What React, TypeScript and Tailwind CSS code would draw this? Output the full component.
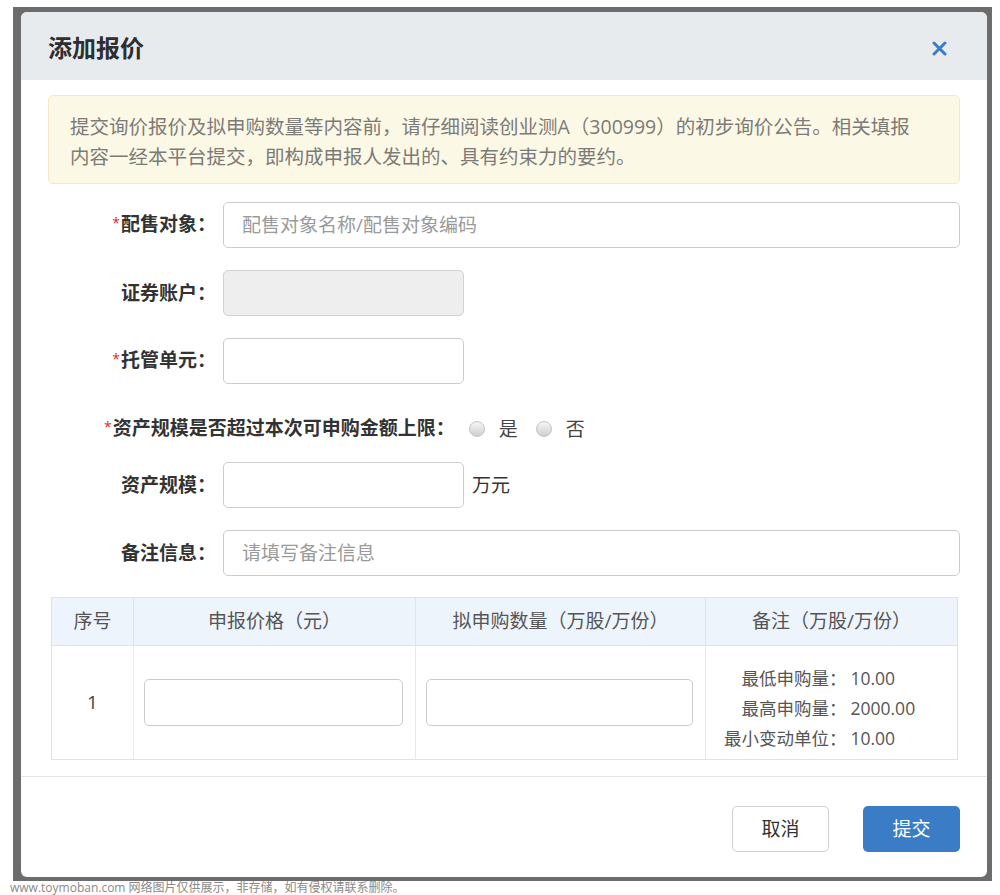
import React from 'react';

function FieldLabel({ text, required }: { text: string; required?: boolean }) {
  return (
    <div className="w-[168px] shrink-0 text-right text-[19px] font-bold text-[#333] leading-[24px] whitespace-nowrap">
      {required && <span className="relative -top-[3px] mr-px text-[14px] font-normal text-[#e0282e]">*</span>}
      {text}：
    </div>
  );
}

function Radio({ label }: { label: string }) {
  return (
    <div className="flex items-center gap-[14px]">
      <span className="w-[16px] h-[16px] rounded-full border border-[#c4c4c4] bg-gradient-to-b from-[#f6f6f6] to-[#cfcfcf]" />
      <span className="text-[19px] leading-[24px] text-[#444]">{label}</span>
    </div>
  );
}

function NoteLine({ label, value }: { label: string; value: string }) {
  return (
    <>
      <span className="text-right">{label}：</span>
      <span>{value}</span>
    </>
  );
}

export default function App() {
  return (
    <div className="w-[1000px] h-[895px] bg-white pt-[7px] pl-[13px] [font-family:'Open_Sans','Noto_Sans_CJK_SC',sans-serif]">
      {/* dark frame around the dialog */}
      <div className="w-[979px] bg-[#6c6c6c] pl-[8px] pr-[5px] pt-[5px] pb-[4px]">
        <div className="w-[966px] h-[865px] rounded-[6px] bg-white flex flex-col overflow-hidden">
          {/* Header */}
          <div className="h-[68px] shrink-0 bg-[#e8ebee] flex items-center justify-between pl-[27px] pr-[40px] pt-[4px]">
            <h1 className="text-[24px] font-bold text-[#2e2e2e] leading-none">添加报价</h1>
            <svg width="15" height="15" viewBox="0 0 15 15" className="text-[#3a7dc6]">
              <path d="M2 2 L13 13 M13 2 L2 13" stroke="currentColor" strokeWidth="3" strokeLinecap="round" />
            </svg>
          </div>

          {/* Body */}
          <div className="flex-1 px-[27px] pt-[15px]">
            <div className="h-[89px] rounded-[5px] border border-[#f3e8c8] bg-[#fbf8e6] pl-[21px] pt-[16px] text-[19.5px] leading-[30px] text-[#7d7b78]">
              提交询价报价及拟申购数量等内容前，请仔细阅读创业测A（300999）的初步询价公告。相关填报
              <br />
              内容一经本平台提交，即构成申报人发出的、具有约束力的要约。
            </div>

            <div className="flex flex-col">
              <div className="mt-[18px] h-[46px] flex items-center gap-[7px]">
                <FieldLabel text="配售对象" required />
                <input
                  readOnly
                  placeholder="配售对象名称/配售对象编码"
                  className="h-[46px] w-[739px] rounded-[5px] border border-[#ccc] bg-white px-[18px] text-[19px] placeholder:text-[#9a9a9a] outline-none"
                />
              </div>

              <div className="mt-[22px] h-[46px] flex items-center gap-[7px]">
                <FieldLabel text="证券账户" />
                <input readOnly disabled className="h-[46px] w-[241px] rounded-[5px] border border-[#d2d2d2] bg-[#eeeeee] outline-none" />
              </div>

              <div className="mt-[22px] h-[46px] flex items-center gap-[7px]">
                <FieldLabel text="托管单元" required />
                <input readOnly className="h-[46px] w-[241px] rounded-[5px] border border-[#ccc] bg-white outline-none" />
              </div>

              <div className="mt-[22px] h-[46px] flex items-center pl-[56px]">
                <span className="text-[19px] leading-[24px] font-bold text-[#333] whitespace-nowrap">
                  <span className="relative -top-[3px] mr-px text-[14px] font-normal text-[#e0282e]">*</span>
                  资产规模是否超过本次可申购金额上限：
                </span>
                <div className="ml-[14px] flex items-center gap-[18px]">
                  <Radio label="是" />
                  <Radio label="否" />
                </div>
              </div>

              <div className="mt-[10px] h-[46px] flex items-center gap-[7px]">
                <FieldLabel text="资产规模" />
                <input readOnly className="h-[46px] w-[241px] rounded-[5px] border border-[#ccc] bg-white outline-none" />
                <span className="ml-px text-[19px] leading-[24px] text-[#333]">万元</span>
              </div>

              <div className="mt-[22px] h-[46px] flex items-center gap-[7px]">
                <FieldLabel text="备注信息" />
                <input
                  readOnly
                  placeholder="请填写备注信息"
                  className="h-[46px] w-[739px] rounded-[5px] border border-[#ccc] bg-white px-[18px] text-[19px] placeholder:text-[#9a9a9a] outline-none"
                />
              </div>
            </div>

            {/* Quote table */}
            <div className="mt-[21px] ml-[3px] w-[907px] border border-[#dbe3ec] text-[19px] text-[#555]">
              <div className="grid grid-cols-[81px_282px_290px_252px] h-[48px] bg-[#eef4fb] border-b border-[#dbe3ec]">
                <div className="flex items-center justify-center">序号</div>
                <div className="flex items-center justify-center border-l border-[#dbe3ec]">申报价格（元）</div>
                <div className="flex items-center justify-center border-l border-[#dbe3ec]">拟申购数量（万股/万份）</div>
                <div className="flex items-center justify-center border-l border-[#dbe3ec]">备注（万股/万份）</div>
              </div>
              <div className="grid grid-cols-[81px_282px_290px_252px] h-[113px]">
                <div className="flex items-center justify-center text-[#444]">1</div>
                <div className="flex items-center pl-[10px] pr-[12px] border-l border-[#e6e9ee]">
                  <input readOnly className="h-[47px] w-full rounded-[5px] border border-[#ccc] bg-white outline-none" />
                </div>
                <div className="flex items-center pl-[10px] pr-[12px] border-l border-[#e6e9ee]">
                  <input readOnly className="h-[47px] w-full rounded-[5px] border border-[#ccc] bg-white outline-none" />
                </div>
                <div className="border-l border-[#e6e9ee] pl-[18px] pt-[17px]">
                  <div className="grid grid-cols-[auto_auto] justify-start gap-x-[4px] text-[17.5px] leading-[30px] text-[#555]">
                    <NoteLine label="最低申购量" value="10.00" />
                    <NoteLine label="最高申购量" value="2000.00" />
                    <NoteLine label="最小变动单位" value="10.00" />
                  </div>
                </div>
              </div>
            </div>
          </div>

          {/* Footer */}
          <div className="h-[101px] shrink-0 border-t border-[#e5e5e5] flex justify-end items-start gap-[34px] pr-[27px] pt-[29px]">
            <button className="w-[97px] h-[46px] rounded-[5px] border border-[#cfcfcf] bg-white text-[19px] text-[#333]">取消</button>
            <button className="w-[97px] h-[46px] rounded-[5px] bg-[#3a7dc6] text-[19px] text-white">提交</button>
          </div>
        </div>
      </div>
      <div className="-ml-[3px] pt-px text-[12px] leading-[12px] text-[#8a8a8a] whitespace-nowrap">
        www.toymoban.com 网络图片仅供展示，非存储，如有侵权请联系删除。
      </div>
    </div>
  );
}
